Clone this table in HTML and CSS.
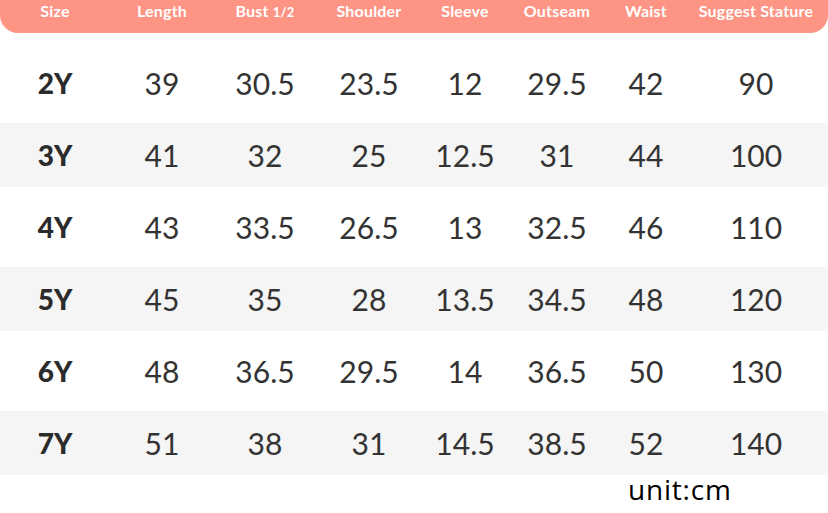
FILE: index.html
```html
<!DOCTYPE html>
<html>
<head>
<meta charset="utf-8">
<link rel="stylesheet" href="styles.css">
</head>
<body>
<div class="chart">
  <div class="head row">
    <div>Size</div><div>Length</div><div>Bust <span class="frac">1/2</span></div><div>Shoulder</div><div>Sleeve</div><div>Outseam</div><div>Waist</div><div>Suggest Stature</div>
  </div>
  <div class="body">
    <div class="row data"><div class="sz">2Y</div><div>39</div><div>30.5</div><div>23.5</div><div>12</div><div>29.5</div><div>42</div><div>90</div></div>
    <div class="row data alt"><div class="sz">3Y</div><div>41</div><div>32</div><div>25</div><div>12.5</div><div>31</div><div>44</div><div>100</div></div>
    <div class="row data"><div class="sz">4Y</div><div>43</div><div>33.5</div><div>26.5</div><div>13</div><div>32.5</div><div>46</div><div>110</div></div>
    <div class="row data alt"><div class="sz">5Y</div><div>45</div><div>35</div><div>28</div><div>13.5</div><div>34.5</div><div>48</div><div>120</div></div>
    <div class="row data"><div class="sz">6Y</div><div>48</div><div>36.5</div><div>29.5</div><div>14</div><div>36.5</div><div>50</div><div>130</div></div>
    <div class="row data alt"><div class="sz">7Y</div><div>51</div><div>38</div><div>31</div><div>14.5</div><div>38.5</div><div>52</div><div>140</div></div>
  </div>
  <div class="unit">unit:cm</div>
</div>
</body>
</html>
```
FILE: styles.css
```css
html, body {
  margin: 0;
  padding: 0;
  background: #fff;
}
.chart {
  width: 828px;
  height: 513px;
  overflow: hidden;
}
.row {
  display: grid;
  grid-template-columns: 110px 104px 102px 106px 86px 98px 80px 140px;
  align-items: center;
  justify-items: center;
}
.head {
  height: 33px;
  background: #fe9584;
  border-radius: 0 0 18px 18px;
  color: #fff;
  font-family: Lato, "Liberation Sans", sans-serif;
  font-weight: 700;
  font-size: 16px;
  letter-spacing: 0.2px;
  align-items: start;
  padding-top: 1px;
  box-sizing: border-box;
}
.frac {
  font-size: 13px;
}
.body {
  margin-top: 18px;
  display: flex;
  flex-direction: column;
  gap: 8px;
}
.data {
  height: 64px;
  font-family: Lato, "Liberation Sans", sans-serif;
  font-size: 30px;
  color: #333;
}
.alt {
  background: #f5f5f5;
}
.sz {
  font-weight: 900;
  font-size: 28px;
  color: #2b2b2b;
}
.unit {
  margin: 0 0 0 628px;
  font-family: "Open Sans", "Noto Sans", sans-serif;
  font-size: 28px;
  letter-spacing: 0.8px;
  color: #000;
  line-height: 28px;
}
```
